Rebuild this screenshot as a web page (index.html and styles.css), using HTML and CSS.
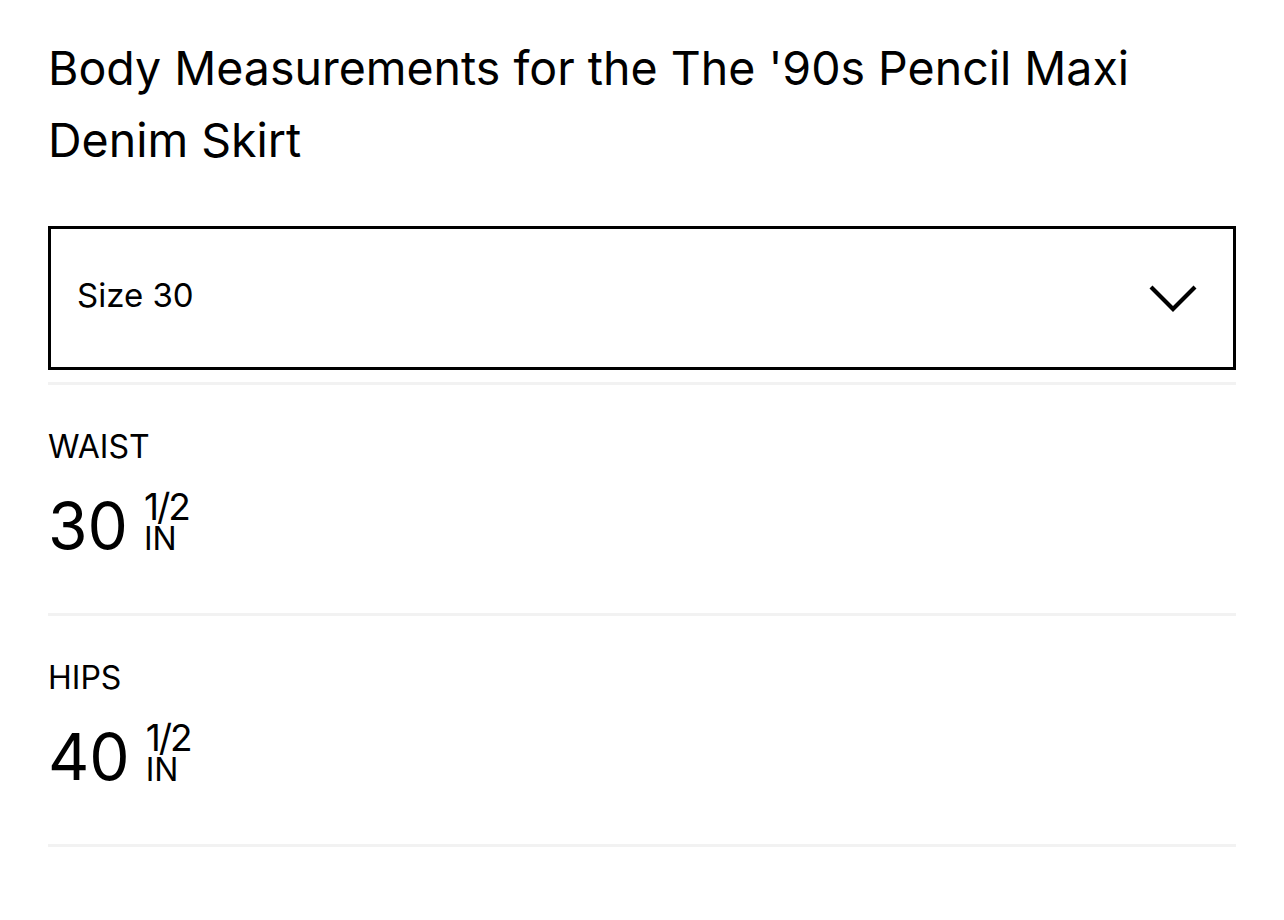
FILE: index.html
```html
<!DOCTYPE html>
<html>
<head>
<meta charset="utf-8">
<link rel="stylesheet" href="styles.css">
</head>
<body>
<div class="page">
  <h1 class="title">Body Measurements for the The '90s Pencil Maxi Denim Skirt</h1>
  <div class="select">
    <span class="select-label">Size 30</span>
    <svg class="chevron" width="48" height="28" viewBox="0 0 48 28"><path d="M2 3 L24 25 L46 3" fill="none" stroke="#000" stroke-width="4.2"/></svg>
  </div>
  <div class="measure">
    <div class="m-label">WAIST</div>
    <div class="m-value"><span class="m-num">30</span><span class="m-frac"><span class="frac">1/2</span><span class="unit">IN</span></span></div>
  </div>
  <div class="measure">
    <div class="m-label">HIPS</div>
    <div class="m-value"><span class="m-num">40</span><span class="m-frac"><span class="frac">1/2</span><span class="unit">IN</span></span></div>
  </div>
</div>
</body>
</html>
```
FILE: styles.css
```css
html, body { margin: 0; padding: 0; background: #fff; }
body { font-family: Inter, "Liberation Sans", sans-serif; color: #000; }
.page { padding: 0 48px; }
.title { font-size: 46.5px; line-height: 72px; font-weight: 400; margin: 32px 0 0; width: 1150px; }
.select { margin-top: 50px; height: 138px; border: 3px solid #000; display: flex; align-items: center; justify-content: space-between; padding: 0 36px 0 26px; }
.select-label { font-size: 33px; margin-bottom: 6px; }
.chevron { display: block; }
.measure { border-top: 3px solid #f2f2f2; height: 231px; box-sizing: border-box; padding-top: 42px; }
.select + .measure { margin-top: 12px; }
.measure:last-child { border-bottom: 3px solid #f2f2f2; height: 234px; }
.m-label { font-size: 32px; line-height: 40px; }
.m-value { display: flex; align-items: flex-end; margin-top: 26px; }
.m-num { font-size: 64px; line-height: 64px; }
.m-frac { display: flex; flex-direction: column; margin-left: 16px; margin-bottom: 7px; gap: 6px; }
.frac { font-size: 37px; line-height: 28px; letter-spacing: -2px; }
.unit { font-size: 32px; line-height: 24px; }
```
